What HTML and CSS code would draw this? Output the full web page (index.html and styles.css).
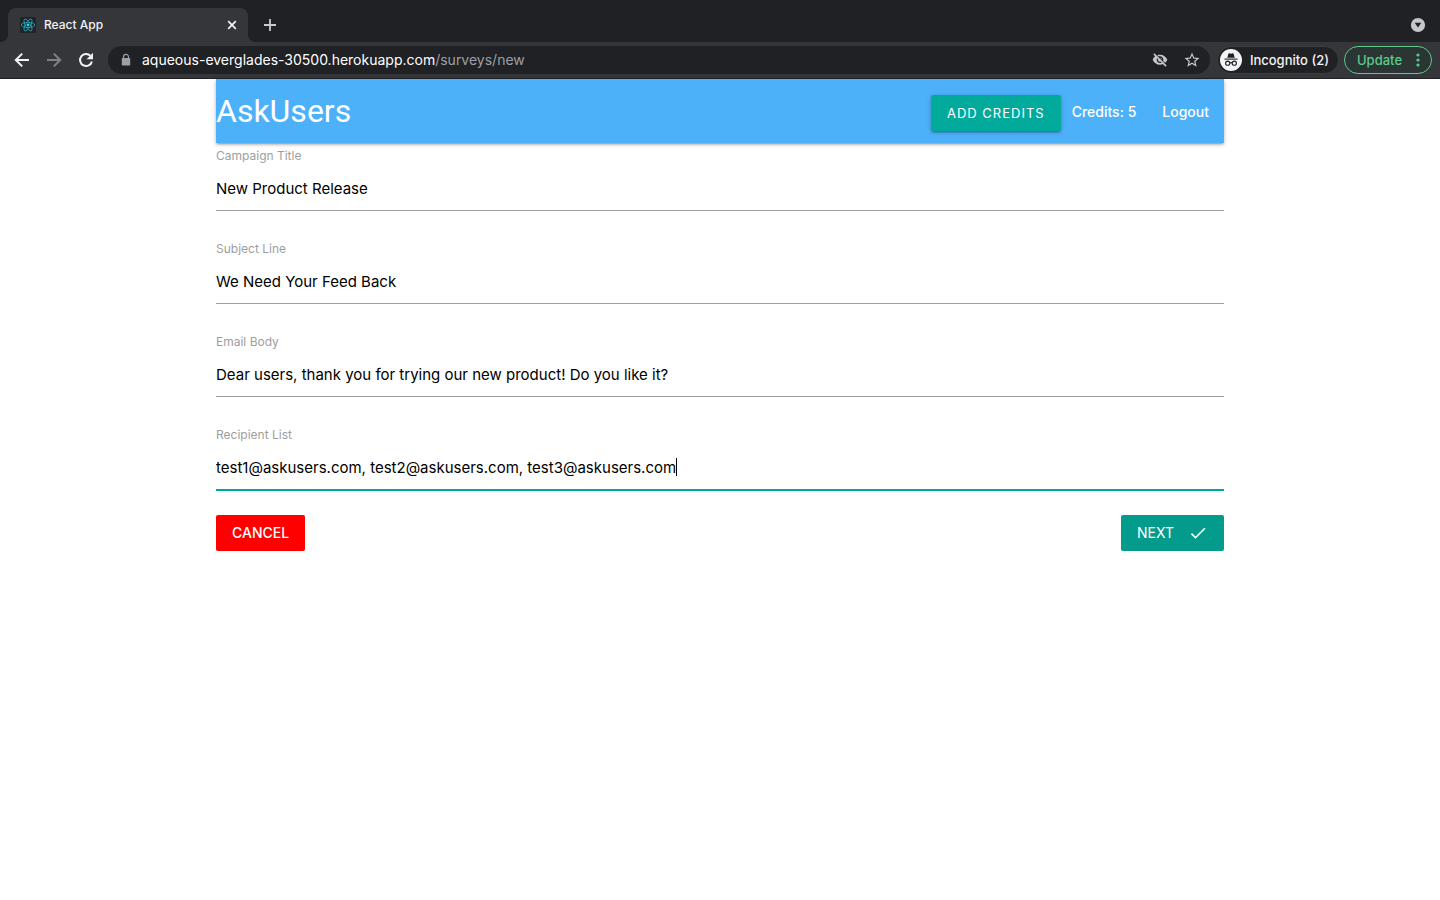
FILE: index.html
```html
<!DOCTYPE html>
<html lang="en">
<head>
<meta charset="utf-8">
<meta name="viewport" content="width=device-width, initial-scale=1">
<title>React App</title>
<link rel="stylesheet" href="styles.css">
</head>
<body>
<div class="browser">
  <div class="tabstrip">
    <div class="tab">
      <svg class="favicon" viewBox="0 0 16 16" aria-hidden="true">
        <rect width="16" height="16" rx="1.5" fill="#222326"/>
        <g fill="none" stroke="#1fa9c0" stroke-width=".8">
          <ellipse cx="8" cy="8" rx="6.7" ry="2.6"/>
          <ellipse cx="8" cy="8" rx="6.7" ry="2.6" transform="rotate(60 8 8)"/>
          <ellipse cx="8" cy="8" rx="6.7" ry="2.6" transform="rotate(120 8 8)"/>
        </g>
        <circle cx="8" cy="8" r="1.4" fill="#2ed3ee"/>
      </svg>
      <span class="tab-title">React App</span>
      <button class="icon-button tab-close" type="button" aria-label="Close tab">
        <svg viewBox="0 0 16 16" width="16" height="16"><path d="M4.2 4.2l7.6 7.6M11.8 4.2l-7.6 7.6" fill="none" stroke="#f1f3f4" stroke-width="1.7"/></svg>
      </button>
    </div>
    <button class="icon-button new-tab" type="button" aria-label="New tab">
      <svg viewBox="0 0 16 16" width="16" height="16"><path d="M8 2v12M2 8h12" fill="none" stroke="#c8cacd" stroke-width="1.8"/></svg>
    </button>
    <button class="icon-button tab-search" type="button" aria-label="Search tabs">
      <svg viewBox="0 0 16 16" width="16" height="16"><circle cx="8" cy="8" r="7.1" fill="#c4c7cb"/><path d="M4.7 5.8h6.6L8 10.6z" fill="#202124"/></svg>
    </button>
  </div>
  <div class="toolbar">
    <div class="nav-buttons">
      <button class="icon-button" type="button" aria-label="Back">
        <svg viewBox="0 0 16 16" width="16" height="16"><path d="M15 8H2.2M8.2 1.6L1.8 8l6.4 6.4" fill="none" stroke="#f1f3f4" stroke-width="2"/></svg>
      </button>
      <button class="icon-button" type="button" aria-label="Forward">
        <svg viewBox="0 0 16 16" width="16" height="16"><path d="M1 8h12.8M7.8 1.6L14.2 8l-6.4 6.4" fill="none" stroke="#7f8184" stroke-width="2"/></svg>
      </button>
      <button class="icon-button" type="button" aria-label="Reload">
        <svg viewBox="0 0 16 16" width="16" height="16"><path d="M13.9 9.4A6 6 0 1 1 12.5 3.9" fill="none" stroke="#f1f3f4" stroke-width="2"/><path d="M15 .8v6.4H8.6z" fill="#f1f3f4"/></svg>
      </button>
    </div>
    <div class="omnibox">
      <svg class="lock" viewBox="0 0 16 16" aria-hidden="true"><rect x="3.8" y="6" width="8.4" height="7.6" rx=".8" fill="#9aa0a6"/><path d="M5.5 6.4V4.9a2.5 2.5 0 0 1 5 0v1.5" fill="none" stroke="#9aa0a6" stroke-width="1.2"/></svg>
      <span class="url"><span class="host">aqueous-everglades-30500.herokuapp.com</span>/surveys/new</span>
      <div class="omnibox-actions">
        <button class="icon-button" type="button" aria-label="Third-party cookies blocked">
          <svg viewBox="0 0 24 24" width="16" height="16" fill="#c4c7cb"><path d="M12 6.5c2.76 0 5 2.24 5 5 0 .65-.13 1.26-.36 1.83l2.92 2.92c1.51-1.26 2.7-2.89 3.43-4.75-1.73-4.39-6-7.5-11-7.5-1.4 0-2.74.25-3.98.7l2.16 2.16C10.74 6.63 11.35 6.5 12 6.5zM2 3.77l2.28 2.28.46.46C3.08 7.8 1.78 9.52 1 11.5c1.73 4.39 6 7.5 11 7.5 1.55 0 3.03-.3 4.38-.84l.42.42L20.23 22l1.77-1.77L3.77 2 2 3.77zm5.53 5.5l1.55 1.55c-.05.21-.08.43-.08.68 0 1.66 1.34 3 3 3 .22 0 .44-.03.65-.08l1.55 1.55c-.67.33-1.41.53-2.2.53-2.76 0-5-2.24-5-5 0-.79.2-1.53.53-2.23zm4.31-.78l3.15 3.15.02-.16c0-1.66-1.34-3-3-3l-.17.01z"/></svg>
        </button>
        <button class="icon-button" type="button" aria-label="Bookmark this page">
          <svg viewBox="0 0 24 24" width="18" height="18" fill="#c4c7cb"><path d="M22 9.24l-7.19-.62L12 2 9.19 8.63 2 9.24l5.46 4.73L5.82 21 12 17.27 18.18 21l-1.63-7.03L22 9.24zM12 15.4l-3.76 2.27 1-4.28-3.32-2.88 4.38-.38L12 6.1l1.71 4.04 4.38.38-3.32 2.88 1 4.28L12 15.4z"/></svg>
        </button>
      </div>
    </div>
    <button class="profile" type="button">
      <svg viewBox="0 0 22 22" width="22" height="22" aria-hidden="true"><circle cx="11" cy="11" r="11" fill="#f1f3f4"/><path d="M7.3 8.8l1.1-4.1c.1-.4.5-.6.9-.4l1.7.5 1.7-.5c.4-.2.8 0 .9.4l1.1 4.1z" fill="#202124"/><path d="M4.5 10.1h13" stroke="#202124" stroke-width="1.1"/><g fill="none" stroke="#202124" stroke-width="1.1"><circle cx="7.7" cy="14.2" r="2.1"/><circle cx="14.3" cy="14.2" r="2.1"/><path d="M9.8 14q1.2-.8 2.4 0"/></g></svg>
      <span>Incognito (2)</span>
    </button>
    <button class="update" type="button">
      <span>Update</span>
      <svg viewBox="0 0 4 14" width="4" height="14" fill="#5bcb8b" aria-hidden="true"><circle cx="2" cy="2" r="1.6"/><circle cx="2" cy="7" r="1.6"/><circle cx="2" cy="12" r="1.6"/></svg>
    </button>
  </div>
</div>

<div class="container">
  <nav class="navbar">
    <a class="brand" href="#">AskUsers</a>
    <div class="nav-items">
      <button class="btn btn-credits" type="button">Add Credits</button>
      <span class="credits">Credits: 5</span>
      <a class="logout" href="#">Logout</a>
    </div>
  </nav>
  <form class="survey-form">
    <div class="field">
      <label for="title">Campaign Title</label>
      <div class="control"><input id="title" type="text" value="New Product Release"></div>
    </div>
    <div class="field">
      <label for="subject">Subject Line</label>
      <div class="control"><input id="subject" type="text" value="We Need Your Feed Back"></div>
    </div>
    <div class="field">
      <label for="body">Email Body</label>
      <div class="control"><input id="body" type="text" value="Dear users, thank you for trying our new product! Do you like it?"></div>
    </div>
    <div class="field active">
      <label for="recipients">Recipient List</label>
      <div class="control"><input id="recipients" type="text" value="test1@askusers.com, test2@askusers.com, test3@askusers.com"><span class="caret"></span></div>
    </div>
    <div class="actions">
      <button class="btn btn-cancel" type="button">Cancel</button>
      <button class="btn btn-next" type="button"><span>Next</span>
        <svg viewBox="0 0 24 24" width="20" height="20" fill="#fff" aria-hidden="true"><path d="M9 16.17L4.83 12l-1.42 1.41L9 19 21 7l-1.41-1.41z"/></svg>
      </button>
    </div>
  </form>
</div>
</body>
</html>
```

FILE: styles.css
```css
* {
  box-sizing: border-box;
}

body {
  margin: 0;
  background: #fff;
  color: #000;
  font-family: Inter, "Liberation Sans", sans-serif;
  font-size: 14px;
}

button {
  padding: 0;
  border: 0;
  background: none;
  color: inherit;
  font: inherit;
  cursor: pointer;
}

svg {
  display: block;
  flex: none;
}

/* Browser frame */
.browser {
  border-bottom: 1px solid #202124;
  background: #35363a;
  color: #f1f3f4;
}

.icon-button {
  display: flex;
  align-items: center;
  justify-content: center;
  width: 32px;
  height: 28px;
}

.tabstrip {
  display: flex;
  align-items: center;
  height: 42px;
  padding: 8px 6px 0 8px;
  background: #202124;
}

.tab {
  position: relative;
  display: flex;
  align-items: center;
  gap: 8px;
  width: 240px;
  height: 34px;
  padding: 0 8px 0 12px;
  border-radius: 8px 8px 0 0;
  background: #35363a;
  font-size: 12px;
  font-weight: 500;
}

.tab::before,
.tab::after {
  content: "";
  position: absolute;
  bottom: 0;
  width: 8px;
  height: 8px;
}

.tab::before {
  right: 100%;
  background: radial-gradient(circle at 0 0, #202124 8px, #35363a 8px);
}

.tab::after {
  left: 100%;
  background: radial-gradient(circle at 100% 0, #202124 8px, #35363a 8px);
}

.favicon {
  width: 16px;
  height: 16px;
}

.tab-title {
  flex: 1;
  padding-bottom: 2px;
}

.tab-close {
  width: 16px;
}

.new-tab {
  margin-left: 6px;
}

.tab-search {
  margin-left: auto;
}

.toolbar {
  display: flex;
  align-items: center;
  height: 36px;
  padding: 0 8px 0 6px;
}

.nav-buttons {
  display: flex;
  margin-right: 6px;
}

.omnibox {
  display: flex;
  flex: 1;
  align-items: center;
  gap: 8px;
  height: 28px;
  padding: 0 2px 0 10px;
  border-radius: 14px;
  background: #202124;
}

.lock {
  width: 16px;
  height: 16px;
}

.url {
  flex: 1;
  padding-bottom: 2px;
  color: #9aa0a6;
}

.host {
  color: #fff;
}

.omnibox-actions {
  display: flex;
}

.profile {
  display: flex;
  align-items: center;
  gap: 8px;
  height: 28px;
  margin: 0 5px 0 7px;
  padding: 0 9px 0 2px;
  border: 1px solid #3c3d41;
  border-radius: 14px;
  background: #202124;
  font-size: 13px;
  font-weight: 500;
  white-space: nowrap;
}

.update {
  display: flex;
  align-items: center;
  justify-content: space-between;
  width: 88px;
  height: 28px;
  padding: 0 11px 0 12px;
  border: 1px solid #5bcb8b;
  border-radius: 14px;
  background: #2b3533;
  color: #5bcb8b;
  font-size: 13px;
  font-weight: 500;
}

/* Page */
.container {
  width: 70%;
  max-width: 1280px;
  margin: 0 auto;
}

.navbar {
  display: flex;
  align-items: center;
  justify-content: space-between;
  height: 64px;
  background: #4db1fa;
  color: #fff;
  box-shadow: 0 2px 2px rgba(0, 0, 0, .14), 0 3px 1px -2px rgba(0, 0, 0, .12), 0 1px 5px rgba(0, 0, 0, .2);
}

.navbar a {
  color: #fff;
  text-decoration: none;
}

.navbar .brand {
  font-family: Roboto, "Liberation Sans", sans-serif;
  font-size: 32px;
}

.nav-items {
  display: flex;
  align-items: center;
  font-weight: 500;
}

.btn {
  height: 36px;
  padding: 0 16px 2px;
  border-radius: 2px;
  color: #fff;
  font-size: 14px;
  text-transform: uppercase;
}

.btn-credits {
  margin: 4px 11px 0 0;
  padding-bottom: 0;
  background: #02aa9c;
  font-size: 13px;
  font-weight: 400;
  letter-spacing: 1px;
  box-shadow: 0 2px 2px rgba(0, 0, 0, .14), 0 3px 1px -2px rgba(0, 0, 0, .12), 0 1px 5px rgba(0, 0, 0, .2);
}

.logout {
  padding: 0 15px 0 26px;
}

.field label {
  display: block;
  padding-top: 4px;
  color: #9e9e9e;
  font-size: 12px;
  line-height: 18px;
}

.control {
  display: flex;
  align-items: center;
  height: 46px;
  margin-bottom: 25px;
  border-bottom: 1px solid #9e9e9e;
}

.control input {
  width: 100%;
  height: 44px;
  padding: 2px 0 0;
  border: 0;
  outline: 0;
  background: transparent;
  color: #000;
  font: inherit;
  font-size: 15px;
}

.active .control {
  height: 47px;
  margin-bottom: 24px;
  border-bottom: 2px solid #02a696;
}

.active .control input {
  width: auto;
  field-sizing: content;
}

.caret {
  width: 1px;
  height: 18px;
  background: #000;
}

.actions {
  display: flex;
  justify-content: space-between;
}

.btn-cancel {
  background: #f00;
  font-weight: 500;
}

.btn-next {
  display: flex;
  align-items: center;
  gap: 14px;
  padding-bottom: 0;
  background: #039b8b;
}

.btn-next span {
  padding-bottom: 2px;
}
```
